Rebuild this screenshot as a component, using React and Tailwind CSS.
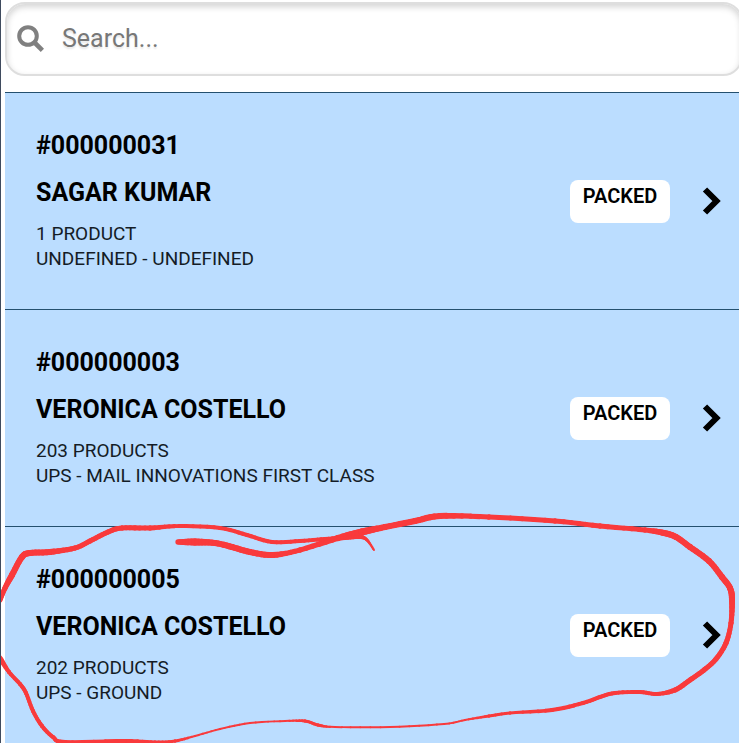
import React, { useState } from "react"

const orders = [
  {
    id: "#000000031",
    customer: "SAGAR KUMAR",
    products: "1 PRODUCT",
    shipping: "UNDEFINED - UNDEFINED",
    status: "PACKED",
  },
  {
    id: "#000000003",
    customer: "VERONICA COSTELLO",
    products: "203 PRODUCTS",
    shipping: "UPS - MAIL INNOVATIONS FIRST CLASS",
    status: "PACKED",
  },
  {
    id: "#000000005",
    customer: "VERONICA COSTELLO",
    products: "202 PRODUCTS",
    shipping: "UPS - GROUND",
    status: "PACKED",
  },
]

// Pen strokes, each point is [x, y, pen width]
const outline = [
  [178, 542, 5], [195, 542, 7], [215, 543, 6], [232, 547, 6], [250, 552, 6], [273, 555, 6],
  [300, 550, 5], [338, 538, 6], [362, 532, 7], [385, 527, 6], [415, 521, 6], [440, 516, 6],
  [489, 517, 5], [555, 521, 5], [600, 526, 5], [645, 530, 5], [664, 533, 6], [676, 537, 6],
  [690, 547, 6], [709, 561, 6], [722, 577, 6], [730, 588, 6], [732, 600, 6], [731, 623, 5],
  [726, 643, 5], [716, 659, 5], [704, 670, 5], [690, 680, 5], [675, 690, 5], [657, 694, 4],
  [640, 692, 4], [615, 693, 4], [600, 697, 4], [583, 703, 4], [552, 710, 4], [510, 713, 3],
  [489, 716, 3], [465, 720, 2], [444, 724, 2], [390, 727, 2], [335, 727, 2], [318, 725, 3],
  [305, 721, 3], [285, 721, 2], [250, 723, 2], [220, 729, 2], [195, 736, 2], [175, 741, 3],
  [155, 742, 3], [125, 741, 4], [65, 742, 4], [53, 737, 4], [42, 726, 4], [33, 711, 4],
  [26, 693, 4], [20, 684, 4], [9, 672, 4], [0, 658, 5],
]

const tail = [
  [0, 600, 5], [5, 588, 5], [12, 575, 6], [22, 557, 6], [30, 553, 6], [50, 552, 6],
  [75, 548, 5], [90, 541, 5], [108, 532, 5], [122, 528, 5], [150, 528, 5], [180, 526, 4],
  [220, 528, 4], [247, 535, 4], [272, 542, 4], [300, 541, 4], [325, 539, 4], [345, 538, 4],
  [360, 537, 4], [367, 540, 3], [374, 550, 2],
]

const spline = (a, b, c, d, t) =>
  0.5 *
  (2 * b +
    (c - a) * t +
    (2 * a - 5 * b + 4 * c - d) * t * t +
    (3 * b - a - 3 * c + d) * t * t * t)

function PenStroke({ points }) {
  const samples = []
  for (let i = 0; i < points.length - 1; i++) {
    const p = [points[i - 1] || points[i], points[i], points[i + 1], points[i + 2] || points[i + 1]]
    for (let s = 0; s <= 6; s++) {
      samples.push([0, 1, 2].map((k) => spline(p[0][k], p[1][k], p[2][k], p[3][k], s / 6)))
    }
  }
  return (
    <g stroke="#f93a3c" strokeLinecap="round">
      {samples.slice(1).map((s, i) => (
        <line key={i} x1={samples[i][0]} y1={samples[i][1]} x2={s[0]} y2={s[1]} strokeWidth={s[2]} />
      ))}
    </g>
  )
}

function SearchBar() {
  const [query, setQuery] = useState("")

  return (
    <label className="-mr-1 flex h-[74px] items-center gap-[17px] rounded-[20px] border-2 border-[#dedede] bg-white pl-[10px] shadow-[inset_0_3px_6px_#d4d4d4]">
      <svg viewBox="0 0 28 28" className="size-7 shrink-0" fill="none" stroke="#808080" strokeWidth="4">
        <circle cx="11" cy="11" r="8.8" />
        <path d="M17 17L25.4 25.4" strokeWidth="4.6" />
      </svg>
      <input
        type="text"
        aria-label="Search orders"
        value={query}
        onChange={(e) => setQuery(e.target.value)}
        placeholder="Search..."
        className="h-10 min-w-0 flex-1 bg-transparent text-[25px] leading-10 outline-none text-shadow-[0_2px_2px_#0000001a] placeholder:text-[#777777]"
      />
    </label>
  )
}

function OrderRow({ order }) {
  return (
    <li className="flex items-center border-t border-[#24506f] bg-[#bbddff] py-[38px] pr-[18px] pl-[31px]">
      <div className="min-w-0 flex-1">
        <h2 className="text-[25px] leading-[30px] font-bold">{order.id}</h2>
        <h3 className="mt-[17px] text-[25px] leading-[30px] font-bold">{order.customer}</h3>
        <p className="mt-[13px] text-[19px] leading-[25px] text-[#141c26]">{order.products}</p>
        <p className="text-[19px] leading-[25px] text-[#141c26]">{order.shipping}</p>
      </div>
      <span className="h-[43px] w-[100px] rounded-[8px] bg-white pt-1 text-center text-[20px] leading-[25px] font-semibold">
        {order.status}
      </span>
      <button type="button" aria-label={`Open order ${order.id}`} className="ml-8">
        <svg viewBox="0 0 19 28" className="h-7 w-[19px]" fill="none" stroke="#000" strokeWidth="6">
          <path d="M3 2.5L14.5 14L3 25.5" />
        </svg>
      </button>
    </li>
  )
}

function App() {
  const font = "font-['Roboto',sans-serif]"

  return (
    <main className={`relative overflow-hidden border-l border-[#3f4b5e] bg-white pt-[2px] pl-1 text-black ${font}`}>
      <SearchBar />
      <ul className="mt-4">
        {orders.map((order) => (
          <OrderRow key={order.id} order={order} />
        ))}
      </ul>
      <svg viewBox="1 0 738 743" className="pointer-events-none absolute top-0 left-0 h-[743px] w-[738px]">
        <PenStroke points={outline} />
        <PenStroke points={tail} />
      </svg>
    </main>
  )
}

export default App
